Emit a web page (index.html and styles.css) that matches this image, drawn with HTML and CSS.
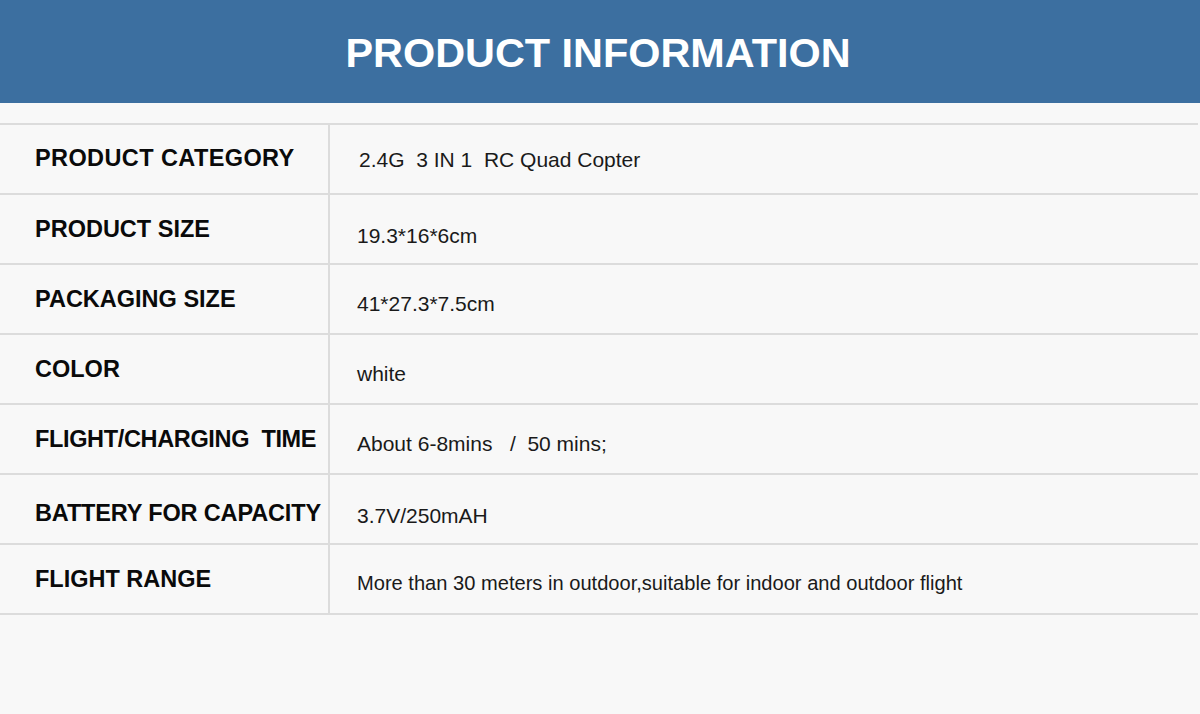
FILE: index.html
```html
<!DOCTYPE html>
<html lang="en">
<head>
<meta charset="utf-8">
<title>Product Information</title>
<link rel="stylesheet" href="styles.css">
</head>
<body>
<header class="banner">
  <h1 class="banner-title">PRODUCT INFORMATION</h1>
</header>
<section class="spec-table">
  <div class="spec-row">
    <div class="spec-label spec-label-high spec-label-wide">PRODUCT CATEGORY</div>
    <div class="spec-value spec-value-high">2.4G  3 IN 1  RC Quad Copter</div>
  </div>
  <div class="spec-row">
    <div class="spec-label">PRODUCT SIZE</div>
    <div class="spec-value spec-value-low">19.3*16*6cm</div>
  </div>
  <div class="spec-row">
    <div class="spec-label">PACKAGING SIZE</div>
    <div class="spec-value">41*27.3*7.5cm</div>
  </div>
  <div class="spec-row">
    <div class="spec-label">COLOR</div>
    <div class="spec-value">white</div>
  </div>
  <div class="spec-row">
    <div class="spec-label spec-label-tight">FLIGHT/CHARGING  TIME</div>
    <div class="spec-value">About 6-8mins   /  50 mins;</div>
  </div>
  <div class="spec-row">
    <div class="spec-label spec-label-low spec-label-snug">BATTERY FOR CAPACITY</div>
    <div class="spec-value spec-value-low">3.7V/250mAH</div>
  </div>
  <div class="spec-row">
    <div class="spec-label">FLIGHT RANGE</div>
    <div class="spec-value spec-value-long">More than 30 meters in outdoor,suitable for indoor and outdoor flight</div>
  </div>
</section>
</body>
</html>
```

FILE: styles.css
```css
html, body {
  margin: 0;
  padding: 0;
}

body {
  background: #f8f8f8;
  width: 1200px;
  height: 714px;
  overflow: hidden;
  font-family: "Liberation Sans", Arial, sans-serif;
}

.banner {
  height: 103px;
  background: #3c6fa0;
  display: flex;
  align-items: center;
  justify-content: center;
}

.banner-title {
  margin: 0;
  padding-top: 3px;
  padding-right: 4px;
  color: #ffffff;
  font-size: 41.4px;
  font-weight: bold;
  line-height: 48px;
}

.spec-table {
  margin-top: 20px;
  width: 1198px;
  border-top: 2px solid #dcdcdc;
}

.spec-row {
  display: flex;
  height: 68px;
  border-bottom: 2px solid #dcdcdc;
}

.spec-label {
  width: 293px;
  padding-left: 35px;
  border-right: 2px solid #dcdcdc;
  display: flex;
  align-items: center;
  font-size: 23.5px;
  line-height: 28px;
  font-weight: bold;
  color: #0a0a0a;
  white-space: pre;
}

.spec-label-high {
  padding-bottom: 3px;
}

.spec-label-low {
  padding-top: 8px;
}

.spec-label-wide {
  letter-spacing: 0.4px;
}

.spec-label-tight {
  letter-spacing: -0.35px;
}

.spec-label-snug {
  letter-spacing: -0.15px;
}

.spec-value {
  flex: 1;
  padding-left: 27px;
  padding-top: 9px;
  display: flex;
  align-items: center;
  font-size: 21px;
  line-height: 28px;
  color: #1a1a1a;
  white-space: pre;
}

.spec-value-high {
  padding-top: 2px;
  padding-left: 29px;
}

.spec-value-low {
  padding-top: 13px;
}

.spec-value-long {
  font-size: 20.1px;
  padding-top: 8px;
}
```
